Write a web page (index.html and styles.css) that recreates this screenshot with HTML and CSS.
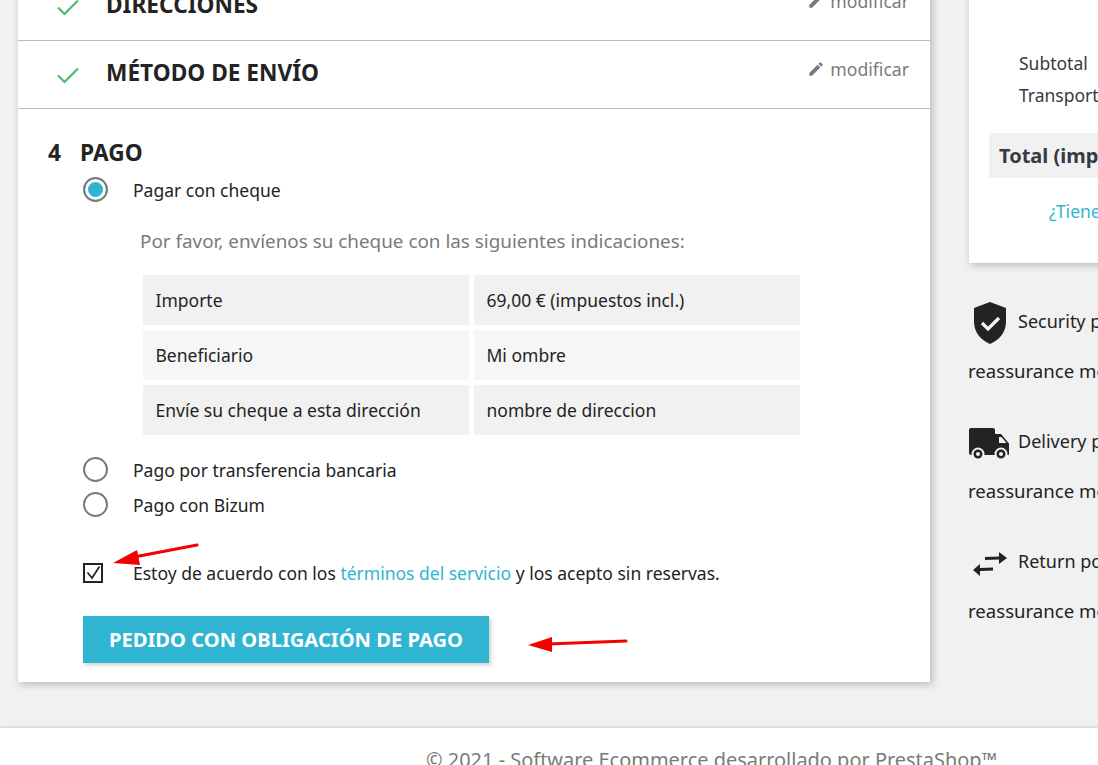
FILE: index.html
```html
<!DOCTYPE html>
<html lang="es">
<head>
  <meta charset="UTF-8">
  <title>Pago</title>
  <link rel="stylesheet" href="styles.css">
</head>
<body>

  <div class="page">
    <div class="columns">

      <div class="steps">
        <div class="step-done">
          <svg class="check" viewBox="0 0 24 24"><path d="M2 12.5l6.5 6.5L22 5.5" /></svg>
          <h2>DIRECCIONES</h2>
          <a class="edit"><svg viewBox="0 0 24 24"><path d="M3 17.25V21h3.75L17.81 9.94l-3.75-3.75L3 17.25zM20.71 7.04a1 1 0 0 0 0-1.41l-2.34-2.34a1 1 0 0 0-1.41 0l-1.83 1.83 3.75 3.75 1.83-1.83z" /></svg>modificar</a>
        </div>
        <div class="step-done">
          <svg class="check" viewBox="0 0 24 24"><path d="M2 12.5l6.5 6.5L22 5.5" /></svg>
          <h2>MÉTODO DE ENVÍO</h2>
          <a class="edit"><svg viewBox="0 0 24 24"><path d="M3 17.25V21h3.75L17.81 9.94l-3.75-3.75L3 17.25zM20.71 7.04a1 1 0 0 0 0-1.41l-2.34-2.34a1 1 0 0 0-1.41 0l-1.83 1.83 3.75 3.75 1.83-1.83z" /></svg>modificar</a>
        </div>

        <div class="step-current">
          <h2 class="step-title"><span class="step-num">4</span>PAGO</h2>

          <div class="option">
            <span class="radio checked"></span>
            <span>Pagar con cheque</span>
          </div>

          <p class="cheque-intro">Por favor, envíenos su cheque con las siguientes indicaciones:</p>

          <div class="cheque-table">
            <div class="cell dark">Importe</div>
            <div class="cell dark">69,00 € (impuestos incl.)</div>
            <div class="cell">Beneficiario</div>
            <div class="cell">Mi ombre</div>
            <div class="cell dark">Envíe su cheque a esta dirección</div>
            <div class="cell dark">nombre de direccion</div>
          </div>

          <div class="option">
            <span class="radio"></span>
            <span>Pago por transferencia bancaria</span>
          </div>
          <div class="option">
            <span class="radio"></span>
            <span>Pago con Bizum</span>
          </div>

          <div class="terms">
            <span class="checkbox"><svg viewBox="0 0 16 16"><path d="M2.500 7.500l4.500 5.500L14.500 1.500" /></svg></span>
            <span>Estoy de acuerdo con los <a class="link">términos del servicio</a> y los acepto sin reservas.</span>
          </div>

          <button class="pay-btn">PEDIDO CON OBLIGACIÓN DE PAGO</button>
        </div>
      </div>

      <div class="side">
        <div class="summary">
          <div class="line">Subtotal</div>
          <div class="line">Transporte</div>
          <div class="total">Total (impuestos incl.)</div>
          <a class="promo">¿Tienes un código promocional?</a>
        </div>

        <div class="reassure">
          <div class="reassure-head">
            <svg viewBox="0 0 42 42"><path fill="#232323" d="M22 0l16 6v14c0 10-6.500 18-16 22C12.500 38 6 30 6 20V6z" /><path fill="none" stroke="#f1f1f1" stroke-width="3.200" d="M14 21l6 6 11-11" /></svg>
            <span>Security policy (edit with Customer reassurance</span>
          </div>
          <div class="reassure-sub">reassurance module)</div>
        </div>
        <div class="reassure">
          <div class="reassure-head">
            <svg viewBox="0 0 42 42"><path fill="#232323" d="M1 8a2 2 0 0 1 2-2h22a2 2 0 0 1 2 2v4h6l8 9.500V32a1 1 0 0 1-1 1H3a2 2 0 0 1-2-2z" /><path fill="#f1f1f1" d="M31 15h2.500l5 6H31z" /><circle cx="10" cy="32" r="5.500" fill="#232323" stroke="#f1f1f1" stroke-width="2" /><circle cx="33" cy="32" r="5.500" fill="#232323" stroke="#f1f1f1" stroke-width="2" /><circle cx="10" cy="32" r="2" fill="#f1f1f1" /><circle cx="33" cy="32" r="2" fill="#f1f1f1" /></svg>
            <span>Delivery policy (edit with Customer reassurance</span>
          </div>
          <div class="reassure-sub">reassurance module)</div>
        </div>
        <div class="reassure">
          <div class="reassure-head">
            <svg viewBox="0 0 42 42"><path fill="#232323" d="M17 15l14-.5V10l8 6-8 6v-4.500l-14 .5zM25 25.500l-13 .5v-4l-7 6 7 6v-5l13-.5z" /></svg>
            <span>Return policy (edit with Customer reassurance</span>
          </div>
          <div class="reassure-sub">reassurance module)</div>
        </div>
      </div>

    </div>

    <div class="footer">© 2021 - Software Ecommerce desarrollado por PrestaShop™</div>
  </div>

  <!-- flechas rojas pintadas encima de la captura -->
  <svg class="arrows" viewBox="0 0 1098 765">
    <path class="arrow-line" d="M197 545L134 557" />
    <path class="arrow-head" d="M113 563L137 550L140 565z" />
    <path class="arrow-line" d="M626 641L548 644" />
    <path class="arrow-head" d="M528 645L552 637L552 652z" />
  </svg>

</body>
</html>
```

FILE: styles.css
```css
html, body {
  margin: 0;
  height: 100%;
  overflow: hidden;
}
body {
  background: #f1f1f1;
  font-family: "Noto Sans", sans-serif;
  font-size: 17.5px;
  color: #232323;
}
.page {
  margin-top: -27px;
}
.columns {
  display: flex;
  align-items: flex-start;
  padding-left: 18px;
  gap: 39px;
}

/* columna izquierda */
.steps {
  width: 912px;
  flex: none;
  background: #fff;
  box-shadow: 2px 2px 8px rgba(0, 0, 0, 0.25);
}
.step-done {
  display: flex;
  height: 67px;
  padding: 0 21px 0 38px;
  align-items: center;
  border-bottom: 1px solid #b9b9b9;
}
.step-done h2 {
  margin: -4px 0 0 26px;
  font-size: 22.7px;
  font-weight: 700;
  line-height: 30px;
}
.check {
  width: 24px;
  height: 24px;
  margin-top: 1px;
  fill: none;
  stroke: #4cbb6c;
  stroke-width: 2.2;
}
.edit {
  display: flex;
  align-items: center;
  margin-left: auto;
  margin-top: -11px;
  font-size: 17.6px;
  color: #7a7a7a;
}
.edit svg {
  width: 18px;
  height: 18px;
  margin-right: 5px;
  fill: #7a7a7a;
}

.step-current {
  padding: 29px 0 19px 30px;
}
.step-title {
  margin: 0 0 4px;
  font-size: 22.7px;
  font-weight: 700;
  line-height: 30px;
}
.step-num {
  display: inline-block;
  width: 32px;
}
.option {
  display: flex;
  align-items: center;
  height: 35px;
  margin-left: 35px;
}
.radio {
  width: 21px;
  height: 21px;
  margin-right: 25px;
  border: 2px solid #7a7a7a;
  border-radius: 50%;
  background: #fff;
  flex: none;
}
.radio.checked {
  background: #2fb5d2;
  box-shadow: inset 0 0 0 3px #fff;
}
.cheque-intro {
  margin: 21px 0 21px 92px;
  font-size: 18.87px;
  line-height: 26px;
  color: #7a7a7a;
}
.cheque-table {
  display: grid;
  grid-template-columns: 326px 326px;
  gap: 5px;
  margin: 0 0 17px 95px;
}
.cell {
  height: 50px;
  padding-left: 12.500px;
  line-height: 50px;
  background: #f6f6f6;
}
.cell.dark {
  background: #f1f1f1;
}
.terms {
  display: flex;
  align-items: center;
  margin: 33px 0 0 35px;
  height: 35px;
}
.checkbox {
  width: 16px;
  height: 16px;
  margin-right: 30px;
  border: 2px solid #232323;
  flex: none;
}
.checkbox svg {
  display: block;
  width: 16px;
  height: 16px;
  fill: none;
  stroke: #232323;
  stroke-width: 1.7;
}
.link {
  color: #2fb5d2;
}
.pay-btn {
  display: block;
  width: 406px;
  height: 47px;
  margin: 26px 0 0 35px;
  padding: 0 0 2px;
  border: none;
  background: #2fb5d2;
  color: #fff;
  font-family: inherit;
  font-size: 20.15px;
  font-weight: 700;
  box-shadow: 2px 2px 4px rgba(0, 0, 0, 0.2);
}

/* columna derecha */
.side {
  width: 340px;
  flex: none;
}
.summary {
  height: 290px;
  padding: 74px 0 0 20px;
  box-sizing: border-box;
  background: #fff;
  box-shadow: 2px 2px 8px rgba(0, 0, 0, 0.25);
}
.line {
  height: 32px;
  padding-left: 30px;
  line-height: 32px;
  color: #363a42;
}
.total {
  height: 45px;
  margin-top: 22px;
  padding-left: 10px;
  line-height: 45px;
  background: #f1f1f1;
  font-size: 20px;
  font-weight: 700;
  color: #363a42;
}
.promo {
  display: block;
  margin: 21px 0 0 60px;
  color: #2fb5d2;
  white-space: nowrap;
}
.reassure {
  height: 120px;
  margin-left: -1px;
  font-size: 18px;
  white-space: nowrap;
}
.summary + .reassure {
  margin-top: 40px;
}
.reassure-head {
  display: flex;
  align-items: center;
  height: 36px;
}
.reassure-head svg {
  width: 42px;
  height: 42px;
  margin: 3px 8px 0 0;
  flex: none;
}
.reassure-sub {
  margin-top: 19px;
  font-size: 18.6px;
  line-height: 26px;
}
.footer {
  height: 60px;
  margin-top: 46px;
  padding: 18px 0 0 426px;
  background: #fff;
  box-shadow: 0 -1px 3px rgba(0, 0, 0, 0.15);
  font-size: 19.97px;
  color: #7a7a7a;
  white-space: nowrap;
}

/* flechas */
.arrows {
  position: absolute;
  left: 0;
  top: 0;
  width: 1098px;
  height: 765px;
  pointer-events: none;
}
.arrow-line {
  fill: none;
  stroke: #f40000;
  stroke-width: 3;
  stroke-linecap: round;
}
.arrow-head {
  fill: #f40000;
}
```
